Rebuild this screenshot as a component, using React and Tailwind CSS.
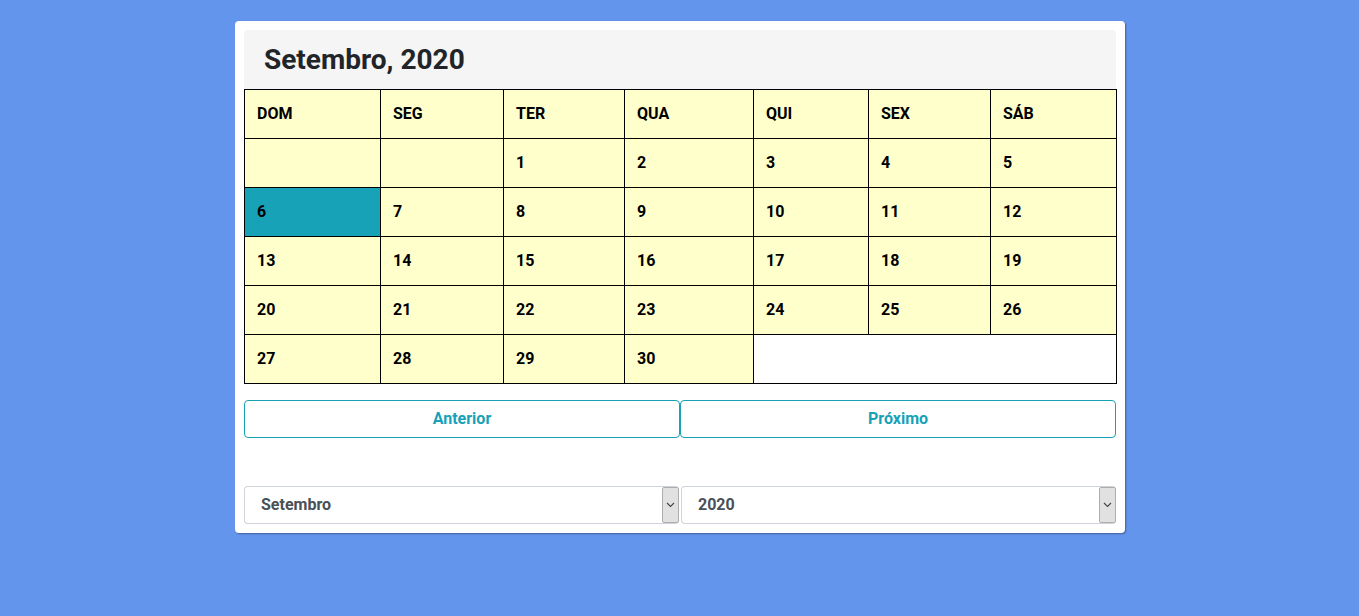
import React from "react";

const days = ["DOM", "SEG", "TER", "QUA", "QUI", "SEX", "SÁB"];
const widths = [136, 123, 121, 129, 115, 122, 126];
const weeks = [
  [null, null, 1, 2, 3, 4, 5],
  [6, 7, 8, 9, 10, 11, 12],
  [13, 14, 15, 16, 17, 18, 19],
  [20, 21, 22, 23, 24, 25, 26],
  [27, 28, 29, 30],
];

function Chevron() {
  return (
    <svg width="9" height="6" viewBox="0 0 9 6" fill="none">
      <path d="M1 1l3.5 3.5L8 1" stroke="#444" strokeWidth="1.1" />
    </svg>
  );
}

function FakeSelect({ value }) {
  return (
    <div className="flex-1 h-[38px] flex items-stretch border border-r-0 border-[#ced4da] rounded-[4px] bg-white">
      <div className="flex-1 flex items-center pl-4 font-bold text-[16px] text-[#495057]">{value}</div>
      <div className="w-[17px] -my-[1px] pt-[1px] pb-[1px] flex">
        <div className="flex-1 bg-[#e1e1e1] border border-[#adadad] rounded-[2px] flex items-center justify-center">
          <Chevron />
        </div>
      </div>
    </div>
  );
}

export default function App() {
  return (
    <div
      className="w-[1359px] h-[616px] bg-[#6495ed] pt-[21px]"
      style={{ fontFamily: "Roboto, 'Liberation Sans', sans-serif" }}
    >
      <div className="ml-[235px] w-[890px] h-[512px] bg-white rounded-[4px] shadow-[1px_1px_2px_rgba(0,0,0,0.35)] p-[9px]">
        <div className="h-[59px] bg-[#f5f5f5] rounded-t-[4px] flex items-center pl-5">
          <h3 className="text-[28px] font-bold text-[#212529] leading-none">Setembro, 2020</h3>
        </div>
        <table className="w-[872px] border-collapse table-fixed border border-black">
          <colgroup>
            {widths.map((w, i) => (
              <col key={i} style={{ width: w }} />
            ))}
          </colgroup>
          <thead>
            <tr>
              {days.map((d) => (
                <th
                  key={d}
                  className="bg-[#ffffcc] border border-black text-left px-3 py-3 h-[49px] text-[16px] leading-6 font-bold text-black"
                >
                  {d}
                </th>
              ))}
            </tr>
          </thead>
          <tbody>
            {weeks.map((w, i) => (
              <tr key={i}>
                {w.map((d, j) => (
                  <td
                    key={j}
                    className={`border border-black px-3 py-3 h-[49px] text-[16px] leading-6 font-bold text-black ${
                      d === 6 ? "bg-[#17a2b8]" : "bg-[#ffffcc]"
                    }`}
                  >
                    {d}
                  </td>
                ))}
              </tr>
            ))}
          </tbody>
        </table>
        <div className="flex mt-4">
          <button className="flex-1 h-[38px] border border-[#17a2b8] rounded-[4px] text-[#17a2b8] font-bold text-[16px] bg-white">
            Anterior
          </button>
          <button className="flex-1 h-[38px] border border-[#17a2b8] rounded-[4px] text-[#17a2b8] font-bold text-[16px] bg-white">
            Próximo
          </button>
        </div>
        <div className="flex gap-[2px] mt-[48px]">
          <FakeSelect value="Setembro" />
          <FakeSelect value="2020" />
        </div>
      </div>
    </div>
  );
}
